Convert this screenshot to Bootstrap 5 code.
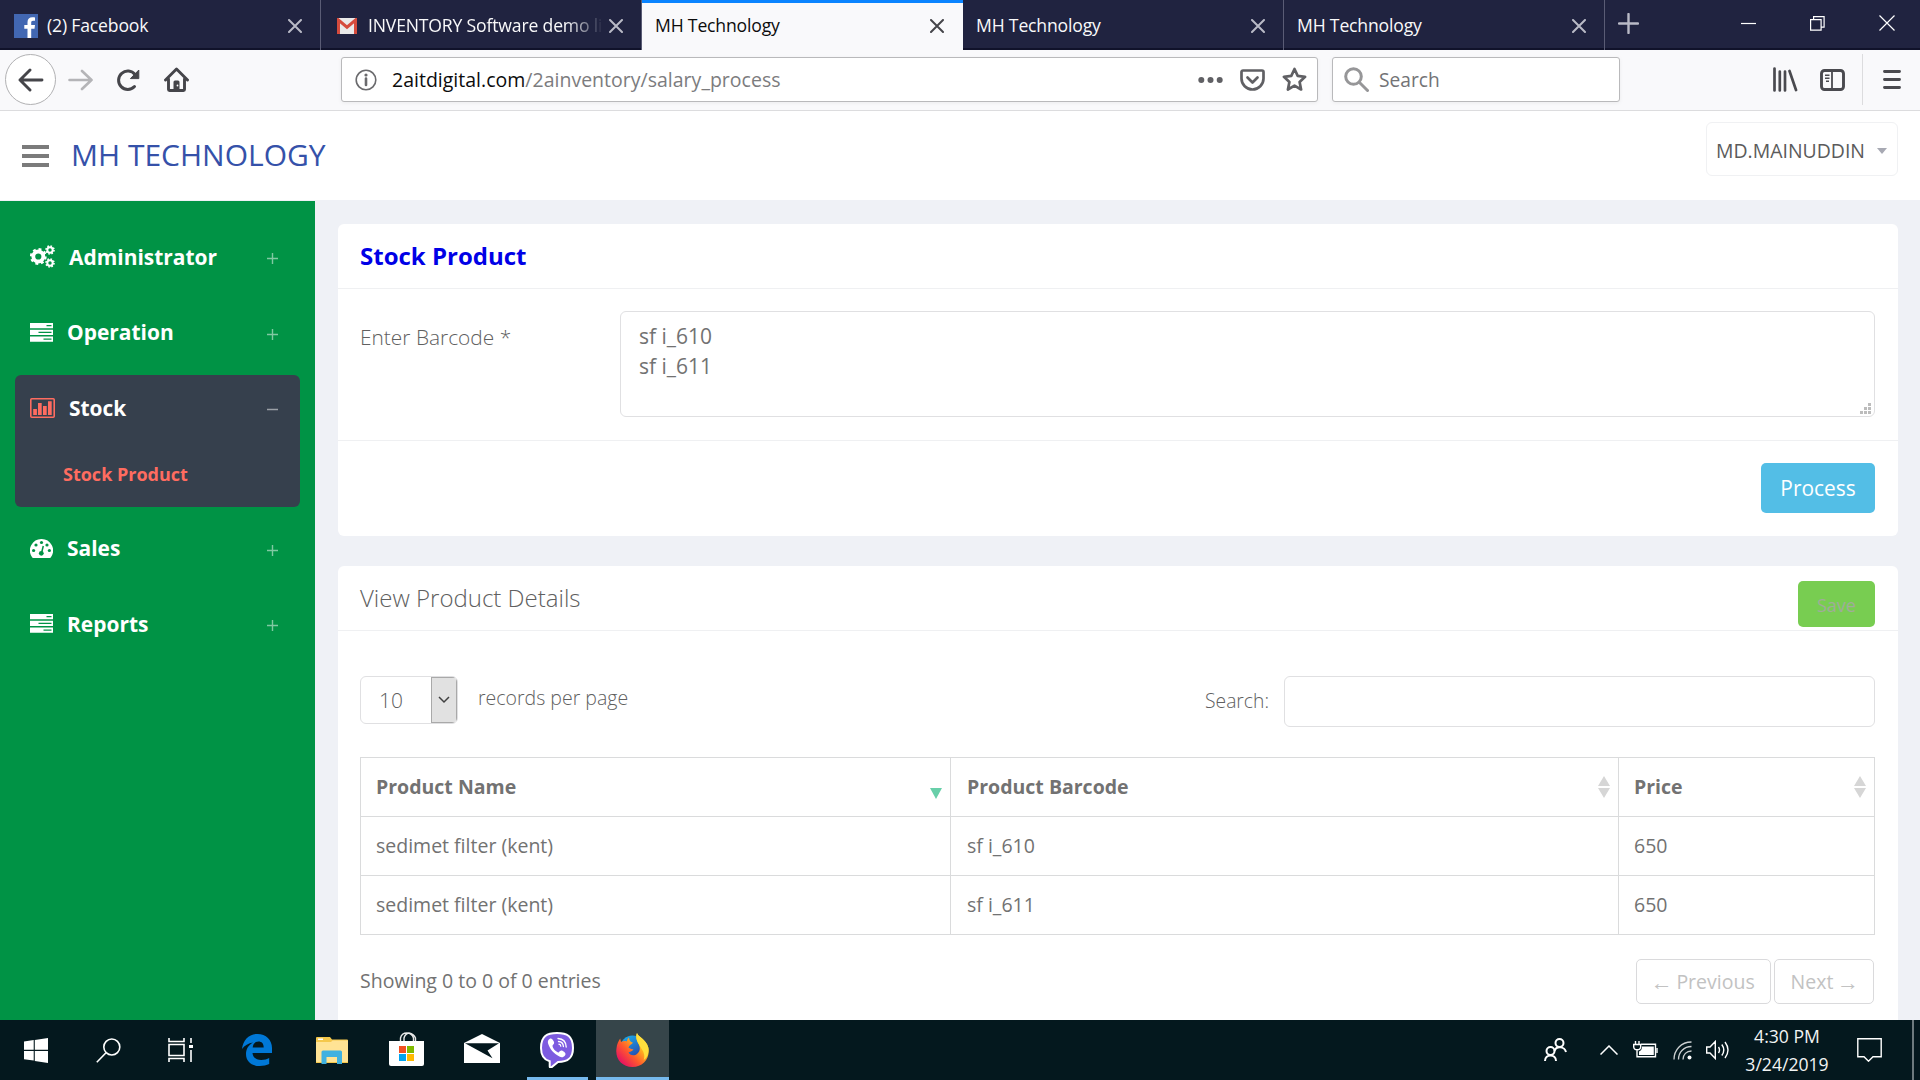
<!DOCTYPE html>
<html lang="en">
<head>
<meta charset="utf-8">
<title>MH Technology</title>
<meta name="viewport" content="width=device-width, initial-scale=1">
<link href="https://cdn.jsdelivr.net/npm/bootstrap@5.3.0/dist/css/bootstrap.min.css" rel="stylesheet">
<style>
body{font-family:"Open Sans","Noto Sans",sans-serif;font-size:19.5px;color:#727272;background:#eff1f6;height:100vh;overflow:hidden;line-height:1.5}
svg{display:block;flex:none}
/* browser chrome */
.tabstrip{height:50px;background:#202340;border-bottom:2px solid #10122a;color:#f9f9fa;font-size:17.6px;letter-spacing:-.17px;flex:none}
.btab{width:321px;height:50px;padding:1px 18px 0 14px;border-right:1px solid #5a5c75;flex:none;white-space:nowrap}
.btab.current{background:#f9f9fb;color:#0c0c0d;border-top:3px solid #0a84ff;border-right:0;padding:0 19px 2px 13px}
.btab .ttl{flex:1 1 0;min-width:0;overflow:hidden}
.fade-end{-webkit-mask-image:linear-gradient(90deg,#000 85%,transparent 101%);mask-image:linear-gradient(90deg,#000 85%,transparent 101%)}
.toolbar{height:61px;background:#f9f9fb;border-bottom:1px solid #dcdcde;flex:none}
.backbtn{width:51px;height:51px;border:1px solid #b1b1b3;background:#fff}
.fieldbox{height:45px;background:#fff;border:1px solid #b9b9bb;border-radius:3px;box-shadow:0 1px 4px rgba(0,0,0,.06)}
.urltext{letter-spacing:.01px;color:#7c7c7e;padding-top:1px}
.urltext b{font-weight:400;color:#0c0c0d}
/* application header */
.apphead{height:89px;background:#fff;flex:none}
.brand{font-size:30px;line-height:40px;color:#3551a9}
.userbox{width:192px;height:54px;border:1px solid #f0f1f3;border-radius:6px;color:#5b5b5b;font-size:19.45px;padding:4px 10px 0 9px}
.caret{border:5.5px solid transparent;border-top:6px solid #a7a9b3;border-bottom:0}
/* sidebar */
.side{width:315px;background:#009345;margin-top:1px;padding:23px 15px 0;flex:none}
.menuitem{height:65px;margin-bottom:10.5px;padding:0 22px 0 15px;color:#fff;font-weight:700;font-size:20.95px}
.menuitem span{padding-top:2px}
.openitem{background:#36404d;border-radius:6px;height:132px;margin-bottom:8.5px}
.openitem .menuitem{margin:0}
.subitem{color:#ff6c60;font-weight:700;font-size:18px;padding:21px 0 0 48px;line-height:27px}
.sign{margin-left:auto;opacity:.5;position:relative;top:2px}
/* content */
.content-area{padding:24px 22px 0 23px}
.panelbox{background:#fff;border-radius:6px;width:1560px}
.panelhead{height:65px;border-bottom:1px solid #eff0f2;padding:0 23px 0 22px;font-size:24px}
.panelhead.first{color:#0000e6;font-weight:700}
.light{font-weight:300;color:#606060}
.barcode-row{padding:22px 23px 22px 22px;height:152px;border-bottom:1px solid #eff0f2}
.barcode-row label{width:260px;font-size:20.9px;line-height:30px;padding-top:11px;flex:none}
.barcode-row textarea{resize:none;height:106px;border:1px solid #e0e0e2;border-radius:6px;font-size:21px;line-height:30px;padding:9px 18px;color:#727272;overflow:hidden}
.grip{position:absolute;right:4px;bottom:3px}
.panelfoot{height:95px;padding:22px 23px}
.btn-process{background:#53bee6;color:#fff;font-size:20.9px;width:114px;height:50px;padding:1px 0 0;border:0;border-radius:5px}
.btn-save{background:#78cd51;color:#a0ac9a;font-size:18px;width:77px;height:46px;padding:2px 0 0;border:0;border-radius:5px;align-self:flex-start;margin-top:15px}
.controls{padding:45px 23px 0 22px}
.lenbox{width:98px;height:48px;border:1px solid #e0e0e2;border-radius:6px;font-size:21px;overflow:hidden}
.lenarrow{width:26px;height:46px;background:#e1e1e1;border:1px solid #a9a9a9;display:flex;align-items:center;justify-content:center}
.searchbox{width:591px;height:51px;border:1px solid #e0e0e2;border-radius:6px}
.grid-wrap{padding:30px 23px 0 22px}
.grid{table-layout:fixed;width:1515px;margin:0;color:#727272;--bs-table-color:#727272;--bs-table-bg:#fff;border-color:#dadbdc}
.grid th,.grid td{height:59px;padding:0 15px;vertical-align:middle}
.grid th{padding-right:8px}
.grid th+th,.grid td+td{padding-left:16px}
.grid th+th+th,.grid td+td+td{padding-left:15px}
.pgbtn{height:45px;border:1px solid #dadadc;border-radius:5px;color:#c2c2c2;padding:1px 0 0;white-space:nowrap;display:flex;align-items:center;justify-content:center;background:#fff}
.arw{font-family:"Liberation Serif",serif;font-size:22px;line-height:20px;position:relative;top:1px;width:19px;display:flex;justify-content:center}
/* taskbar */
.taskbar{height:60px;background:#04181e;flex:none;color:#f2f4f4}
.slot{height:60px;display:flex;align-items:center;justify-content:center;position:relative;flex:none}
.slot.running::after{content:"";position:absolute;left:9px;right:8px;bottom:0;height:3px;background:#76b9ed}
.slot.focused{background:#36454a}
.slot.focused::after{left:0;right:0}
.clock{width:100px;font-size:17.6px;line-height:28px;text-align:center}
.deskedge{width:2px;height:60px;background:#6d7a7e}
</style>
</head>
<body class="d-flex flex-column">
<svg width="0" height="0" class="position-absolute">
<defs>
<symbol id="x" viewBox="0 0 14 14"><path d="M1 1l12 12M13 1L1 13" fill="none" stroke="currentColor" stroke-width="2" stroke-linecap="round"/></symbol>
<symbol id="plus" viewBox="0 0 11 11"><path d="M5.500 0v11M0 5.500h11" stroke="#fff" stroke-width="1.400"/></symbol>
<symbol id="server" viewBox="0 0 23 19"><path d="M0 0h23v5.200H0zM0 6.800h23V12H0zM0 13.600h23v5.200H0z" fill="#fff"/><path d="M16.500 2.600h5M8.500 9.400h13M13.500 16.200h8" stroke="#009345" stroke-width="1.300"/></symbol>
<symbol id="sort" viewBox="0 0 12 22"><path d="M6 0l6 10H0zM6 22l6-10H0z" fill="#d6d6d6"/></symbol>
</defs>
</svg>

<div class="tabstrip d-flex">
  <div class="btab d-flex align-items-center">
    <svg width="24" height="24" viewBox="0 0 24 24" style="margin-right:9px"><rect width="24" height="24" fill="#4267b2"/><path d="M13.500 24v-9.300h-3.200V11h3.200V8.300c0-3.200 2-5 4.900-5 1.200 0 2.100.1 2.600.2v3.300h-1.900c-1.500 0-1.900.8-1.900 1.900V11H21l-.5 3.700h-3.300V24z" fill="#fff"/></svg>
    <div class="ttl">(2) Facebook</div><svg width="14" height="14" color="#b9bac6"><use href="#x"/></svg>
  </div>
  <div class="btab d-flex align-items-center" style="padding-left:16px">
    <svg width="20" height="16" viewBox="0 0 20 16" style="margin-right:11px"><rect width="20" height="16" rx="1.500" fill="#e9e9e9"/><path d="M1.500 16V2L10 9.200 18.500 2v14" fill="none" stroke="#d54b3d" stroke-width="3"/></svg>
    <div class="ttl fade-end">INVENTORY Software demo li</div><svg class="ms-2" width="14" height="14" color="#b9bac6"><use href="#x"/></svg>
  </div>
  <div class="btab current d-flex align-items-center"><div class="ttl">MH Technology</div><svg width="14" height="14" color="#45454a"><use href="#x"/></svg></div>
  <div class="btab d-flex align-items-center" style="padding-left:13px"><div class="ttl">MH Technology</div><svg width="14" height="14" color="#b9bac6"><use href="#x"/></svg></div>
  <div class="btab d-flex align-items-center" style="padding-left:13px"><div class="ttl">MH Technology</div><svg width="14" height="14" color="#b9bac6"><use href="#x"/></svg></div>
  <div class="d-flex align-items-center flex-grow-1" style="padding:0 25px 2px 13px">
    <svg width="21" height="21" viewBox="0 0 21 21"><path d="M10.500 1v19M1 10.500h19" stroke="#b9bac6" stroke-width="2.400" stroke-linecap="round"/></svg>
    <svg class="ms-auto" width="15" height="15" viewBox="0 0 15 15"><path d="M0 7.500h15" stroke="#fff" stroke-width="1.200"/></svg>
    <svg width="15" height="15" viewBox="0 0 15 15" style="margin-left:54px"><path d="M.6 3.600h10.500v10.500H.6zM3.600 3.600v-3h10.500v10.500h-3" fill="none" stroke="#fff" stroke-width="1.200"/></svg>
    <svg width="16" height="16" viewBox="0 0 16 16" style="margin-left:54px"><path d="M.5.5l15 15m0-15l-15 15" stroke="#fff" stroke-width="1.200"/></svg>
  </div>
</div>

<div class="toolbar d-flex align-items-center" style="padding:0 0 1px 5px">
  <div class="backbtn rounded-circle d-flex align-items-center justify-content-center"><svg width="26" height="24" viewBox="0 0 26 24"><path d="M2 12h22M12 2L2 12l10 10" fill="none" stroke="#45454a" stroke-width="2.900" stroke-linecap="round" stroke-linejoin="round"/></svg></div>
  <svg width="25" height="22" viewBox="0 0 25 22" style="margin-left:12px"><path d="M1.500 11h22M14 2l9.500 9L14 20" fill="none" stroke="#b4b4b7" stroke-width="2.600" stroke-linecap="round" stroke-linejoin="round"/></svg>
  <svg width="24" height="24" viewBox="0 0 24 24" style="margin-left:23px"><path d="M18.500 18.500A9.200 9.200 0 1 1 19 6.500" fill="none" stroke="#45454a" stroke-width="3" stroke-linecap="round"/><path d="M22.800 2v8.600h-8.400z" fill="#45454a" stroke="#45454a" stroke-linejoin="round"/></svg>
  <svg width="25" height="25" viewBox="0 0 25 25" style="margin-left:24px"><path d="M1.500 13L12.500 2l11 11M4.500 12v10.500a1 1 0 0 0 1 1h14a1 1 0 0 0 1-1V12" fill="none" stroke="#45454a" stroke-width="2.900" stroke-linecap="round" stroke-linejoin="round"/><path d="M9.500 23v-8a1.500 1.500 0 0 1 1.500-1.500h3a1.500 1.500 0 0 1 1.500 1.500v8z" fill="#45454a"/><circle cx="13.500" cy="18.500" r=".9" fill="#fff"/></svg>
  <div class="fieldbox d-flex align-items-center" style="width:977px;margin-left:152px;padding:0 10px 0 13px">
    <svg width="22" height="22" viewBox="0 0 22 22"><circle cx="11" cy="11" r="9.800" fill="none" stroke="#6a6a6d" stroke-width="1.600"/><path d="M11 9.500V16" stroke="#6a6a6d" stroke-width="2.600" stroke-linecap="round"/><circle cx="11" cy="6" r="1.600" fill="#6a6a6d"/></svg>
    <div class="urltext" style="margin-left:15px"><b>2aitdigital.com</b>/2ainventory/salary_process</div>
    <svg class="ms-auto" width="25" height="8" viewBox="0 0 25 8"><g fill="#606064"><circle cx="3.300" cy="4" r="3"/><circle cx="12.500" cy="4" r="3"/><circle cx="21.700" cy="4" r="3"/></g></svg>
    <svg width="25" height="22" viewBox="0 0 25 22" style="margin-left:17px"><path d="M3 1.500h19a1.500 1.500 0 0 1 1.500 1.500v6.500a11 11 0 0 1-22 0V3A1.500 1.500 0 0 1 3 1.500z" fill="none" stroke="#606064" stroke-width="2.700"/><path d="M7.500 8.500l5 5 5-5" fill="none" stroke="#606064" stroke-width="2.700" stroke-linecap="round" stroke-linejoin="round"/></svg>
    <svg width="25" height="25" viewBox="0 0 25 25" style="margin-left:17px"><path d="M12.500 2l3.200 6.900 7.400.9-5.500 5.100 1.500 7.600-6.600-3.800-6.600 3.800 1.500-7.600L1.900 9.800l7.400-.9z" fill="none" stroke="#606064" stroke-width="2.700" stroke-linejoin="round"/></svg>
  </div>
  <div class="fieldbox d-flex align-items-center" style="width:288px;margin-left:14px;padding:0 11px">
    <svg width="25" height="25" viewBox="0 0 25 25"><circle cx="9.500" cy="9.500" r="7.800" fill="none" stroke="#969698" stroke-width="3"/><path d="M15.500 15.500l8 8" stroke="#969698" stroke-width="3" stroke-linecap="round"/></svg>
    <div style="margin-left:10px;padding-top:1px;font-size:19.200px;color:#737376">Search</div>
  </div>
  <svg class="ms-auto" width="25" height="25" viewBox="0 0 25 25"><path d="M1.500 1.500v22M6.800 4.500v19M12 4.500v19M16.500 4l6.500 19" fill="none" stroke="#4a4a4f" stroke-width="2.700" stroke-linecap="round"/></svg>
  <svg width="25" height="22" viewBox="0 0 25 22" style="margin-left:22px"><rect x="1.500" y="1.500" width="22" height="19" rx="3" fill="none" stroke="#4a4a4f" stroke-width="2.900"/><path d="M12 2v18" stroke="#4a4a4f" stroke-width="1.800"/><path d="M5 6.200h4.500M5 9.200h4.500M6 12.200h3" stroke="#4a4a4f" stroke-width="1.500"/></svg>
  <div style="width:1px;height:51px;background:#dcdcde;margin-left:17px"></div>
  <svg width="18" height="19" viewBox="0 0 18 19" style="margin:0 19px 0 20px"><path d="M1.500 1.500h15M1.500 9.500h15M1.500 17.500h15" stroke="#4a4a4f" stroke-width="2.900" stroke-linecap="round"/></svg>
</div>

<header class="apphead d-flex align-items-start">
  <svg width="27" height="22" viewBox="0 0 27 22" style="margin:34px 0 0 22px"><path d="M0 2h27M0 11h27M0 20h27" stroke="#7b7b7b" stroke-width="4"/></svg>
  <div class="brand" style="margin:24px 0 0 22px">MH TECHNOLOGY</div>
  <div class="userbox d-flex align-items-center justify-content-between ms-auto" style="margin:11px 22px 0 0"><span>MD.MAINUDDIN</span><span class="caret"></span></div>
</header>

<main class="d-flex flex-grow-1 overflow-hidden">
  <nav class="side">
    <div class="menuitem d-flex align-items-center">
      <svg width="25" height="23" viewBox="0 0 25 23" fill="none" stroke="#fff"><circle cx="8.300" cy="11.500" r="5" stroke-width="3.800"/><circle cx="8.300" cy="11.500" r="7.300" stroke-width="2.200" stroke-dasharray="2.870"/><circle cx="20" cy="5" r="2.700" stroke-width="2"/><circle cx="20" cy="5" r="4" stroke-width="1.600" stroke-dasharray="1.570"/><circle cx="20" cy="18" r="2.700" stroke-width="2"/><circle cx="20" cy="18" r="4" stroke-width="1.600" stroke-dasharray="1.570"/></svg>
      <span style="margin-left:14px">Administrator</span><svg class="sign" width="11" height="11"><use href="#plus"/></svg>
    </div>
    <div class="menuitem d-flex align-items-center"><svg width="23" height="19"><use href="#server"/></svg><span style="margin-left:14px">Operation</span><svg class="sign" width="11" height="11"><use href="#plus"/></svg></div>
    <div class="openitem">
      <div class="menuitem d-flex align-items-center"><svg width="25" height="20" viewBox="0 0 25 20"><rect x=".8" y=".8" width="23.400" height="18.400" rx="1" fill="none" stroke="#ff6c60" stroke-width="1.600"/><path d="M3.200 11h3.700v6H3.200zM8 5h3.700v12H8zM13 8h3.700v9H13zM18 3.200h3.700V17H18z" fill="#ff6c60"/></svg><span style="margin-left:14px">Stock</span><svg class="sign" width="11" height="11" viewBox="0 0 11 11"><path d="M0 5.500h11" stroke="#fff" stroke-width="1.500"/></svg></div>
      <div class="subitem">Stock Product</div>
    </div>
    <div class="menuitem d-flex align-items-center"><svg width="23" height="19" viewBox="0 0 23 19"><path d="M11.500 0A11.500 11.500 0 0 0 1.800 17.800Q2.300 19 3.400 19h16.200q1.100 0 1.600-1.200A11.500 11.500 0 0 0 11.500 0z" fill="#fff"/><g fill="#009345"><circle cx="3.600" cy="11.500" r="1.600"/><circle cx="6" cy="6" r="1.600"/><circle cx="11.500" cy="3.500" r="1.600"/><circle cx="17" cy="6" r="1.600"/><circle cx="19.400" cy="11.500" r="1.600"/><circle cx="11.300" cy="14.300" r="2.400"/></g><path d="M11.500 14l1.800-7" stroke="#009345" stroke-width="1.500"/></svg><span style="margin-left:14px">Sales</span><svg class="sign" width="11" height="11"><use href="#plus"/></svg></div>
    <div class="menuitem d-flex align-items-center"><svg width="23" height="19"><use href="#server"/></svg><span style="margin-left:14px">Reports</span><svg class="sign" width="11" height="11"><use href="#plus"/></svg></div>
  </nav>

  <section class="content-area flex-grow-1">
    <div class="panelbox" style="margin-bottom:30px">
      <div class="panelhead first d-flex align-items-center">Stock Product</div>
      <div class="barcode-row d-flex align-items-start">
        <label class="light">Enter Barcode *</label>
        <div class="position-relative flex-grow-1 d-flex">
          <textarea class="form-control">sf i_610
sf i_611</textarea>
          <svg class="grip" width="11" height="11" viewBox="0 0 11 11" fill="#bcbcbc"><path d="M0 8h3v3H0zM4 8h3v3H4zM8 8h3v3H8zM4 4h3v3H4zM8 4h3v3H8zM8 0h3v3H8z"/></svg>
        </div>
      </div>
      <div class="panelfoot d-flex justify-content-end"><button class="btn btn-process">Process</button></div>
    </div>

    <div class="panelbox" style="height:520px">
      <div class="panelhead light d-flex align-items-center"><span>View Product Details</span><button class="btn btn-save ms-auto">Save</button></div>
      <div class="controls d-flex align-items-start light">
        <div class="lenbox d-flex justify-content-between align-items-center"><span style="padding:2px 0 0 18px">10</span><div class="lenarrow"><svg width="12" height="8" viewBox="0 0 12 8"><path d="M1 1l5 5 5-5" fill="none" stroke="#404040" stroke-width="1.500"/></svg></div></div>
        <span style="margin:7px 0 0 20px">records per page</span>
        <span class="ms-auto" style="margin-top:11px;font-size:19.300px">Search:</span>
        <input class="searchbox" style="margin-left:15px">
      </div>
      <div class="grid-wrap">
        <table class="table table-bordered grid">
          <colgroup><col style="width:590px"><col style="width:668px"><col></colgroup>
          <thead><tr>
            <th><div class="d-flex justify-content-between align-items-center">Product Name<svg width="12" height="11" viewBox="0 0 12 11" style="position:relative;top:6px"><path d="M0 0h12L6 11z" fill="#68cfa9"/></svg></div></th>
            <th><div class="d-flex justify-content-between align-items-center">Product Barcode<svg width="12" height="22"><use href="#sort"/></svg></div></th>
            <th><div class="d-flex justify-content-between align-items-center">Price<svg width="12" height="22"><use href="#sort"/></svg></div></th>
          </tr></thead>
          <tbody>
            <tr><td>sedimet filter (kent)</td><td>sf i_610</td><td>650</td></tr>
            <tr><td>sedimet filter (kent)</td><td>sf i_611</td><td>650</td></tr>
          </tbody>
        </table>
        <div class="d-flex align-items-center" style="margin-top:24px">
          <span style="margin-top:-2px">Showing 0 to 0 of 0 entries</span>
          <div class="pgbtn ms-auto" style="width:135px"><span class="arw">←</span>&nbsp;Previous</div>
          <div class="pgbtn" style="width:100px;margin:0 1px 0 3px">Next&nbsp;<span class="arw">→</span></div>
        </div>
      </div>
    </div>
  </section>
</main>

<footer class="taskbar d-flex align-items-center">
  <div class="slot" style="width:72px"><svg width="24" height="25" viewBox="0 0 24 25" fill="#fff"><path d="M0 3.500l9.700-1.400v9.700H0zM10.800 1.900L24 0v11.800H10.800zM0 12.900h9.700v9.700L0 21.200zM10.800 12.900H24v12l-13.200-2z"/></svg></div>
  <div class="slot" style="width:72px"><svg width="25" height="25" viewBox="0 0 25 25" fill="none" stroke="#fff" stroke-width="1.600"><circle cx="15.800" cy="9" r="8"/><path d="M10 14.800L.8 24.300"/></svg></div>
  <div class="slot" style="width:72px"><svg width="25" height="24" viewBox="0 0 25 24" fill="none" stroke="#fff" stroke-width="1.600"><path d="M1 0v3.500h15V0M1 6.500h15v11H1zM1 24v-3.500h15V24M23 0v5M23 12v12"/><path d="M21 7h4v3h-4z" fill="#fff" stroke="none"/></svg></div>
  <div class="slot" style="width:82px"><svg width="30" height="32" viewBox="0 0 30 32"><path d="M0 15C1 6 7 0 15.500 0 24 0 30 6 30 14v5H10.500c.3 4.500 4 7 8.700 7 3 0 6-.8 8-2v6c-2.500 1.300-6 2-9.500 2C9 32 4 27 4 20c0-5 2.500-9 7-11.500C6.500 9 2.500 11.500 0 15zM10.700 13.500h11c0-4-2-6-5.200-6s-5.500 2.500-5.800 6z" fill="#0078d7"/></svg></div>
  <div class="slot" style="width:68px"><svg width="32" height="27" viewBox="0 0 32 27"><path d="M0 1q0-1 1-1h13l2 2.500h15q1 0 1 1V26H0z" fill="#f5c84c"/><path d="M0 5h15l1.500-1.500H32V24q0 1-1 1H1q-1 0-1-1z" fill="#ffe394"/><path d="M2 1.500h5v1.500H2z" fill="#fff"/><path d="M5.500 27V15q0-1.500 1.500-1.500h17.500q1.500 0 1.500 1.500v12h-5v-7h-10.500v7z" fill="#3fb1e0"/></svg></div>
  <div class="slot" style="width:80px;padding-bottom:2px"><svg width="35" height="34" viewBox="0 0 35 34"><path d="M11.500 10V6q1-5 6.500-5 5 0 6.500 5v4M15 9V6q1-4 5-5 5 1 6.500 5v3" fill="none" stroke="#e9e9e9" stroke-width="1.400"/><path d="M0 9h35v23q0 2-2 2H2q-2 0-2-2z" fill="#fff"/><path d="M10 14h7v7h-7z" fill="#f25022"/><path d="M18 14h7v7h-7z" fill="#7fba00"/><path d="M10 22h7v7h-7z" fill="#00a4ef"/><path d="M18 22h7v7h-7z" fill="#ffb900"/></svg></div>
  <div class="slot" style="width:72px;padding-bottom:3px"><svg width="36" height="29" viewBox="0 0 36 29"><path d="M0 9l18-9 18 9v20H0z" fill="#fff"/><path d="M1 9.300h34l-11.500 7.300 5 7.700L1 9.300z" fill="#04181e"/></svg></div>
  <div class="slot running" style="width:78px"><svg width="34" height="36" viewBox="0 0 34 36"><path d="M17 1C27 1 33 4 33 16c0 11-6 14-15 14l-6.500 5.300c-1 .7-1.800.2-1.800-1v-5C3 27.500 1 23 1 16 1 4 7 1 17 1z" fill="#7d5be0" stroke="#fff" stroke-width="2"/><path d="M9.500 7c1.800-1.300 2.800 0 4.300 2.600 1 1.900-.2 2.700-1.300 3.800 0 3 3.300 6.400 6.300 7 1.300-1.500 2.300-2.400 4-1.300 2.500 1.600 3.500 2.600 2.200 4.400-1.500 2-3.500 2.200-5.600 1.100C13.700 21.500 9.700 17 8 11.300 7.500 9.500 8.200 8 9.500 7z" fill="#fff"/><path d="M18 6.500c5 .3 8 3.300 8.200 8.500M18.500 9.500c3 .2 4.700 2 4.900 5M19 12.200c1.200.1 1.700.8 1.800 2" fill="none" stroke="#fff" stroke-width="1.300" stroke-linecap="round"/></svg></div>
  <div class="slot running focused" style="width:73px"><svg width="33" height="34" viewBox="0 0 33 34"><defs><linearGradient id="ff" x1=".9" y1=".1" x2=".15" y2=".85"><stop offset="0" stop-color="#fff04a"/><stop offset=".35" stop-color="#ffb020"/><stop offset=".65" stop-color="#ff5a2c"/><stop offset="1" stop-color="#e8165f"/></linearGradient><linearGradient id="fb" x1="0" y1="0" x2=".6" y2="1"><stop offset="0" stop-color="#18b7f2"/><stop offset="1" stop-color="#2a3fa8"/></linearGradient></defs><circle cx="16.500" cy="15" r="12.500" fill="url(#fb)"/><path d="M21 0c1 4 9 6 11.300 14.500C34.500 25 27 34 16.500 34S-.8 26 .4 16C.8 11 2.600 8 4.200 5.500L5 9c2-1 4-1.200 6-.6 0-1.600.8-3 2-4 .2 3 1.400 4.300 4 5.300-1.500 1.800-4.200 2.600-4.500 5 1.800.4 3 1.700 5 1.600-1 2-3.200 2.600-5 3 1.200 3.500 6 4 8.700 1.500 3.500-3 2.900-7 1.300-10-2-3.600-3-7-1.500-10.800z" fill="url(#ff)"/><path d="M21 0c1 4 9 6 11.300 14.500 1 5.500-1 10-4.500 12.500 1-4 .4-7-1.200-9.500-1.500-2.500-2.700-4.200-4.100-6.700-2-3.600-3-7-1.500-10.800z" fill="#ffdf3d"/></svg></div>

  <svg width="23" height="24" viewBox="0 0 23 24" class="ms-auto" fill="none" stroke="#fff" stroke-width="2"><circle cx="15.500" cy="5" r="4"/><path d="M10.500 13c1.500-5 10-5 11.500 1"/><circle cx="6.500" cy="13" r="4"/><path d="M1 23c0-7.500 11-7.500 11 0"/></svg>
  <svg width="18" height="10" viewBox="0 0 18 10" style="margin-left:33px" fill="none" stroke="#fff" stroke-width="1.500"><path d="M.5 9.500L9 1l8.500 8.500"/></svg>
  <svg width="25" height="17" viewBox="0 0 25 17" style="margin:0 0 2px 15px" fill="none" stroke="#fff" stroke-width="1.400"><path d="M8 3.200h14.500v12.500H4V9M2.500 0v3M6 0v3M.7 3.500h7v2.300q0 3-3.500 3T.7 5.800z"/><path d="M9 5.500h11.800v8.500H6v-3.500q3-1 3-5z" fill="#fff" stroke="none"/><path d="M24 7v5"/></svg>
  <svg width="19" height="19" viewBox="0 0 19 19" style="margin-left:15px" fill="none" stroke="#fff" stroke-width="1.300"><path d="M1 18.500C1 9 8 1 18.500 1M5.500 18.500C5.500 11 11 5.500 18.500 5.500M10 18.500c0-5 3.500-8.500 8.500-8.500" opacity=".8"/><circle cx="16.500" cy="16.500" r="2" fill="#fff" stroke="none"/></svg>
  <svg width="24" height="20" viewBox="0 0 24 20" style="margin-left:14px" fill="none" stroke="#fff" stroke-width="1.400"><path d="M.7 7H4l5.300-5.500v17L4 13H.7zM12.500 7q2 3 0 6M15.800 4.500q4 5.500 0 11M19 2q6 8 0 16"/></svg>
  <div class="clock" style="margin-left:7px"><div>4:30 PM</div><div>3/24/2019</div></div>
  <svg width="25" height="24" viewBox="0 0 25 24" style="margin:0 30px 0 20px" fill="none" stroke="#fff" stroke-width="1.400"><path d="M.8.8h23.400v18H16l-4.500 4.400L7 18.800H.8z"/></svg>
  <div class="deskedge" style="margin-right:6px"></div>
</footer>
<script src="https://cdn.jsdelivr.net/npm/bootstrap@5.3.0/dist/js/bootstrap.bundle.min.js"></script>
</body>
</html>
